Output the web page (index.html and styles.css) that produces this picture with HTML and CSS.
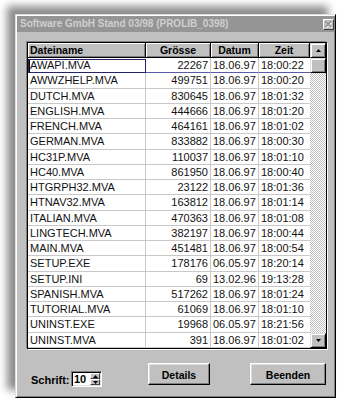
FILE: index.html
```html
<!DOCTYPE html>
<html>
<head>
<meta charset="utf-8">
<link rel="stylesheet" href="styles.css">
</head>
<body>
<div class="window">
  <div class="titlebar">
    <span class="title">Software GmbH Stand 03/98 (PROLIB_0398)</span>
    <span class="close">
      <svg width="7" height="7" viewBox="0 0 7 7">
        <path d="M1 1.5 L6.5 7 M6.5 1.5 L1 7" stroke="#fff" stroke-width="1.4"/>
        <path d="M0.5 0.5 L6 6 M6 0.5 L0.5 6" stroke="#8a8a8a" stroke-width="1.4"/>
      </svg>
    </span>
  </div>
  <div class="client">
    <div class="list">
      <div class="table">
        <div class="hrow">
          <div class="hcell name">Dateiname</div>
          <div class="hcell">Grösse</div>
          <div class="hcell">Datum</div>
          <div class="hcell">Zeit</div>
        </div>
        <div class="row sel"><div class="cell name">AWAPI.MVA</div><div class="cell num">22267</div><div class="cell">18.06.97</div><div class="cell last">18:00:22</div></div>
        <div class="row"><div class="cell name">AWWZHELP.MVA</div><div class="cell num">499751</div><div class="cell">18.06.97</div><div class="cell last">18:00:20</div></div>
        <div class="row"><div class="cell name">DUTCH.MVA</div><div class="cell num">830645</div><div class="cell">18.06.97</div><div class="cell last">18:01:32</div></div>
        <div class="row"><div class="cell name">ENGLISH.MVA</div><div class="cell num">444666</div><div class="cell">18.06.97</div><div class="cell last">18:01:20</div></div>
        <div class="row"><div class="cell name">FRENCH.MVA</div><div class="cell num">464161</div><div class="cell">18.06.97</div><div class="cell last">18:01:02</div></div>
        <div class="row"><div class="cell name">GERMAN.MVA</div><div class="cell num">833882</div><div class="cell">18.06.97</div><div class="cell last">18:00:30</div></div>
        <div class="row"><div class="cell name">HC31P.MVA</div><div class="cell num">110037</div><div class="cell">18.06.97</div><div class="cell last">18:01:10</div></div>
        <div class="row"><div class="cell name">HC40.MVA</div><div class="cell num">861950</div><div class="cell">18.06.97</div><div class="cell last">18:00:40</div></div>
        <div class="row"><div class="cell name">HTGRPH32.MVA</div><div class="cell num">23122</div><div class="cell">18.06.97</div><div class="cell last">18:01:36</div></div>
        <div class="row"><div class="cell name">HTNAV32.MVA</div><div class="cell num">163812</div><div class="cell">18.06.97</div><div class="cell last">18:01:14</div></div>
        <div class="row"><div class="cell name">ITALIAN.MVA</div><div class="cell num">470363</div><div class="cell">18.06.97</div><div class="cell last">18:01:08</div></div>
        <div class="row"><div class="cell name">LINGTECH.MVA</div><div class="cell num">382197</div><div class="cell">18.06.97</div><div class="cell last">18:00:44</div></div>
        <div class="row"><div class="cell name">MAIN.MVA</div><div class="cell num">451481</div><div class="cell">18.06.97</div><div class="cell last">18:00:54</div></div>
        <div class="row"><div class="cell name">SETUP.EXE</div><div class="cell num">178176</div><div class="cell">06.05.97</div><div class="cell last">18:20:14</div></div>
        <div class="row"><div class="cell name">SETUP.INI</div><div class="cell num">69</div><div class="cell">13.02.96</div><div class="cell last">19:13:28</div></div>
        <div class="row"><div class="cell name">SPANISH.MVA</div><div class="cell num">517262</div><div class="cell">18.06.97</div><div class="cell last">18:01:24</div></div>
        <div class="row"><div class="cell name">TUTORIAL.MVA</div><div class="cell num">61069</div><div class="cell">18.06.97</div><div class="cell last">18:01:10</div></div>
        <div class="row"><div class="cell name">UNINST.EXE</div><div class="cell num">19968</div><div class="cell">06.05.97</div><div class="cell last">18:21:56</div></div>
        <div class="row"><div class="cell name">UNINST.MVA</div><div class="cell num">391</div><div class="cell">18.06.97</div><div class="cell last">18:01:02</div></div>
      </div>
      <div class="scroll">
        <div class="sbtn"><svg width="5" height="3" viewBox="0 0 5 3"><path d="M0 3h5L2.5 0z" fill="#000"/></svg></div>
        <div class="sbtn"></div>
        <div class="track"></div>
        <div class="sbtn"><svg width="5" height="3" viewBox="0 0 5 3"><path d="M0 0h5L2.5 3z" fill="#000"/></svg></div>
      </div>
    </div>
    <div class="footer">
      <span class="label">Schrift:</span>
      <div class="spin">
        <span class="spinval">10</span>
        <div class="spinner">
          <div class="sp"><svg width="5" height="3" viewBox="0 0 5 3"><path d="M0 3h5L2.5 0z" fill="#000"/></svg></div>
          <div class="sp"><svg width="5" height="3" viewBox="0 0 5 3"><path d="M0 0h5L2.5 3z" fill="#000"/></svg></div>
        </div>
      </div>
      <div class="btn details">Details</div>
      <div class="btn beenden">Beenden</div>
    </div>
  </div>
</div>
</body>
</html>
```
FILE: styles.css
```css
* { box-sizing: border-box; }
html, body { margin: 0; background: #fff; }
body { font-family: "Liberation Sans", Arial, sans-serif; color: #000; }

.window {
  margin: 14px 0 0 15px;
  width: 321px;
  height: 384px;
  background: #c0c0c0;
  border: 1px solid;
  border-color: #dfdfdf #000 #000 #dfdfdf;
  padding: 1px;
  box-shadow: inset 1px 1px #fff, inset -1px -1px #808080, -8px -8px 8px rgba(0,0,0,0.45);
  display: flex;
  flex-direction: column;
}

.titlebar {
  height: 16px;
  background: #959595;
  display: flex;
  align-items: center;
  justify-content: space-between;
  padding-left: 3px;
}
.title {
  color: #cfcfcf;
  font-weight: bold;
  font-size: 10px;
  line-height: 16px;
  white-space: nowrap;
}
.close {
  width: 11px;
  height: 11px;
  background: #c0c0c0;
  border: 1px solid;
  border-color: #fff #404040 #404040 #fff;
  display: flex;
  align-items: center;
  justify-content: center;
}
.close svg { display: block; }

.client { padding: 10px 7px 0 10px; }

.list {
  display: flex;
  width: 300px;
  height: 307px;
  border: 1px solid #000;
  background: #fff;
  box-shadow: -1px -1px 0 #808080, 1px 1px 0 #fff;
}
.table { width: 282px; }
.hrow, .row {
  display: grid;
  grid-template-columns: 118px 65px 48px 51px;
}
.hrow { height: 15px; }
.hcell {
  background: #c0c0c0;
  border-right: 1px solid #000;
  border-bottom: 1px solid #000;
  box-shadow: inset 1px 1px #fff, inset -1px -1px #808080;
  font-size: 10.5px;
  font-weight: bold;
  line-height: 14px;
  text-align: center;
  white-space: nowrap;
}
.hcell.name { text-align: left; padding-left: 2px; }

.row {
  height: 15.25px;
  font-size: 11px;
  line-height: 14.25px;
  color: #111;
}
.cell {
  border-right: 1px solid #c8c8c8;
  border-bottom: 1px solid #c8c8c8;
  padding: 0 2px;
  white-space: nowrap;
  overflow: hidden;
}
.cell.num { text-align: right; }
.cell.last { border-right: none; }
.row.sel .cell { border-bottom-color: #5a5aaa; }
.row.sel .name { position: relative; overflow: visible; }
.row.sel .name::after {
  content: "";
  position: absolute;
  left: 0; top: 1px; right: -1px; bottom: -1px;
  border: 1px solid #24246a;
}
.row.sel .name::before {
  content: "";
  position: absolute;
  left: 1px; top: 2px;
  width: 1px; height: 12px;
  background: #000;
}

.scroll {
  width: 16px;
  display: flex;
  flex-direction: column;
  background: repeating-conic-gradient(#c0c0c0 0 25%, #fff 0 50%) 0 0 / 2px 2px;
}
.sbtn {
  height: 15px;
  background: #c0c0c0;
  border: 1px solid;
  border-color: #dfdfdf #000 #000 #dfdfdf;
  box-shadow: inset 1px 1px #fff, inset -1px -1px #808080;
  display: flex;
  align-items: center;
  justify-content: center;
}
.sbtn svg { display: block; }
.track { flex: 1; }

.footer {
  display: flex;
  align-items: flex-start;
  margin-top: 14px;
  height: 24px;
}
.label {
  margin: 9px 0 0 4px;
  width: 40px;
  font-size: 11px;
  font-weight: bold;
  line-height: 16px;
}
.spin {
  margin-top: 8px;
  width: 31px;
  height: 16px;
  background: #fff;
  border: 1px solid;
  border-color: #808080 #fff #fff #808080;
  box-shadow: inset 1px 1px #000, inset -1px -1px #dfdfdf;
  padding: 1px 1px 1px 2px;
  display: flex;
  justify-content: space-between;
}
.spinval {
  font-size: 11px;
  font-weight: bold;
  line-height: 12px;
}
.spinner {
  width: 10px;
  display: flex;
  flex-direction: column;
}
.sp {
  height: 6px;
  background: #c0c0c0;
  border: 1px solid;
  border-color: #fff #404040 #404040 #fff;
  display: flex;
  align-items: center;
  justify-content: center;
}
.sp svg { display: block; }

.btn {
  height: 22px;
  background: #c0c0c0;
  border: 1px solid;
  border-color: #fff #000 #000 #fff;
  box-shadow: inset -1px -1px #808080, inset 1px 1px #dfdfdf;
  font-size: 10.5px;
  font-weight: bold;
  line-height: 20px;
  padding-top: 1px;
  text-align: center;
}
.details { margin-left: 46px; width: 62px; }
.beenden { margin-left: 40px; width: 76px; }
```
